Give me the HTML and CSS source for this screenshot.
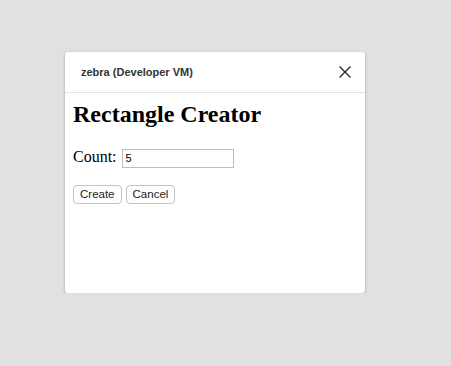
FILE: index.html
```html
<!DOCTYPE html>
<html lang="en">
<head>
    <meta charset="UTF-8">
    <title>zebra (Developer VM)</title>
    <link rel="stylesheet" href="styles.css">
</head>
<body>
    <div class="dialog">
        <div class="dialog-header">
            <span class="dialog-title">zebra (Developer VM)</span>
            <button class="close" aria-label="Close">
                <svg width="12" height="12" viewBox="0 0 12 12">
                    <path d="M0.5 0.5 L11.5 11.5 M11.5 0.5 L0.5 11.5" stroke="#222" stroke-width="1.3" fill="none"/>
                </svg>
            </button>
        </div>
        <div class="dialog-body">
            <h1>Rectangle Creator</h1>
            <div class="row">
                <label for="count">Count:</label>
                <input type="text" id="count" value="5">
            </div>
            <div class="actions">
                <button class="btn">Create</button>
                <button class="btn">Cancel</button>
            </div>
        </div>
    </div>
</body>
</html>
```

FILE: styles.css
```css
body {
    margin: 0;
    padding: 52px 0 0 65px;
    background: #e1e1e1;
    font-family: "Liberation Serif", serif;
    color: #000;
}
.dialog {
    width: 300px;
    height: 241px;
    background: #fff;
    border-radius: 3px;
    box-shadow: 0 1px 3px rgba(0, 0, 0, 0.3);
    overflow: hidden;
}
.dialog-header {
    height: 40px;
    display: flex;
    align-items: center;
    justify-content: space-between;
    padding: 0 13px 0 16px;
    border-bottom: 1px solid #e3e3e3;
}
.dialog-title {
    font-family: "Liberation Sans", Arial, sans-serif;
    font-size: 11px;
    font-weight: bold;
    color: #333;
}
.close {
    border: none;
    background: none;
    padding: 0;
    width: 14px;
    height: 14px;
    display: flex;
    align-items: center;
    justify-content: center;
}
.dialog-body {
    padding: 8px 8px 8px;
}
h1 {
    font-size: 24px;
    font-weight: bold;
    margin: 0 0 20px;
}
.row {
    display: flex;
    align-items: baseline;
    gap: 5px;
    font-size: 16px;
}
input {
    width: 112px;
    height: 19px;
    box-sizing: border-box;
    border: 1px solid #bdbdbd;
    padding: 0 3px;
    font-family: "Liberation Sans", Arial, sans-serif;
    font-size: 11px;
}
.actions {
    display: flex;
    gap: 4px;
    margin-top: 17px;
}
.btn {
    height: 19px;
    padding: 0 6px;
    background: #fff;
    border: 1px solid #c2c2c2;
    border-radius: 4px;
    font-family: "Liberation Sans", Arial, sans-serif;
    font-size: 11.5px;
    color: #222;
}
```
